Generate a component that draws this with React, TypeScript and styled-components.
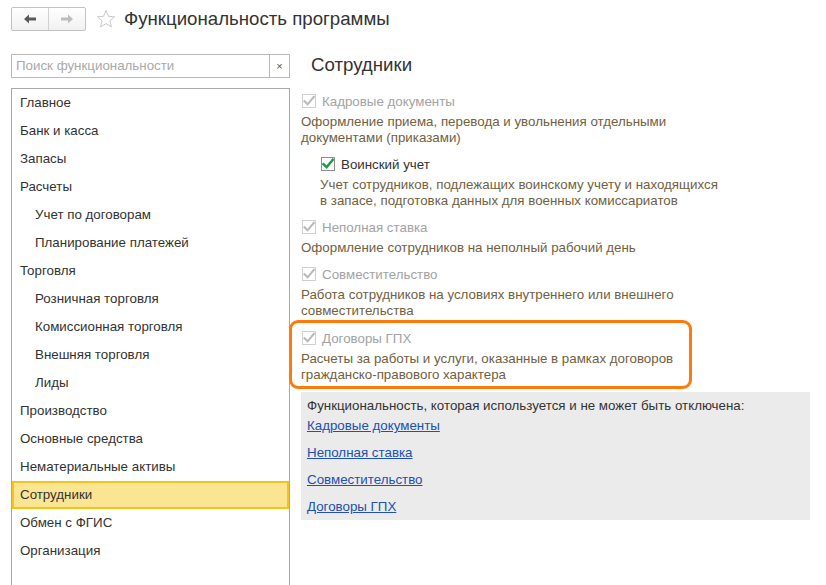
import React from 'react';
import styled, { createGlobalStyle } from 'styled-components';

const GlobalStyle = createGlobalStyle`
  html, body {
    margin: 0;
    padding: 0;
    background: #fff;
  }
  body {
    font-family: 'Liberation Sans', Arial, sans-serif;
    font-size: 10pt;
    color: #333;
  }
`;

const Page = styled.div`
  width: 826px;
  height: 585px;
  overflow: hidden;
  display: flex;
  flex-direction: column;
`;

const TopBar = styled.div`
  display: flex;
  align-items: center;
  height: 24px;
  padding: 7px 0 0 11px;
`;

const NavGroup = styled.div`
  display: flex;
  height: 24px;
  border: 1px solid #c2c2c2;
  border-radius: 2px;
  box-sizing: border-box;
  background: linear-gradient(#ffffff, #f1f1f1);
`;

const NavButton = styled.div<{ $divider?: boolean }>`
  width: 36px;
  display: flex;
  align-items: center;
  justify-content: center;
  border-right: ${(p) => (p.$divider ? '1px solid #d0d0d0' : 'none')};
`;

const StarBox = styled.div`
  margin-left: 10px;
  width: 20px;
  height: 20px;
  display: flex;
  align-items: center;
  justify-content: center;
`;

const Title = styled.h1`
  margin: 0 0 0 8px;
  font-size: 14pt;
  font-weight: normal;
  color: #333;
  line-height: 24px;
`;

const Body = styled.div`
  display: flex;
  flex: 1;
  gap: 11px;
  padding: 23px 0 0 11px;
  min-height: 0;
`;

const LeftColumn = styled.div`
  width: 279px;
  display: flex;
  flex-direction: column;
`;

const SearchBox = styled.div`
  display: flex;
  height: 24px;
  border: 1px solid #b9b9b9;
  box-sizing: border-box;
`;

const SearchInput = styled.div`
  flex: 1;
  padding-left: 4px;
  color: #a9a9a9;
  line-height: 22px;
`;

const ClearButton = styled.div`
  width: 19px;
  border-left: 1px solid #b9b9b9;
  display: flex;
  align-items: center;
  justify-content: center;
  color: #555;
  font-size: 11px;
`;

const SectionList = styled.div`
  margin-top: 10px;
  flex: 1;
  border: 1px solid #a9a9a9;
  border-bottom: none;
`;

const SectionItem = styled.div<{ $sub?: boolean; $selected?: boolean }>`
  height: 28px;
  line-height: ${(p) => (p.$selected ? '24px' : '28px')};
  box-sizing: border-box;
  color: #333;
  white-space: nowrap;
  background: ${(p) => (p.$selected ? '#fce592' : 'transparent')};
  border: ${(p) => (p.$selected ? '2px solid #f4c419' : 'none')};
  padding-left: ${(p) => (p.$selected ? '6px' : p.$sub ? '23px' : '8px')};
`;

const RightColumn = styled.div`
  width: 509px;
  display: flex;
  flex-direction: column;
`;

const SectionTitle = styled.h2`
  margin: 0 0 0 10px;
  height: 24px;
  line-height: 21px;
  font-size: 14pt;
  font-weight: normal;
  color: #333;
`;

const Options = styled.div`
  margin-top: 13px;
  display: flex;
  flex-direction: column;
`;

const Option = styled.div<{ $indent?: boolean; $tight?: boolean }>`
  margin-left: ${(p) => (p.$indent ? '19px' : '0')};
  margin-bottom: ${(p) => (p.$tight ? '1px' : '8px')};
`;

const CheckRow = styled.div`
  display: flex;
  align-items: center;
  height: 20px;
  padding-left: 1px;
`;

const CheckBox = styled.div<{ $disabled?: boolean }>`
  width: 14px;
  height: 14px;
  box-sizing: border-box;
  border: 1px solid ${(p) => (p.$disabled ? '#cfcfcf' : '#8f8f8f')};
  background: #fff;
  display: flex;
  align-items: center;
  justify-content: center;
`;

const CheckLabel = styled.span<{ $disabled?: boolean }>`
  margin-left: 6px;
  color: ${(p) => (p.$disabled ? '#a3a3a3' : '#333')};
`;

const Description = styled.div`
  margin-top: 3px;
  line-height: 16px;
  color: #72613f;
`;

const Highlight = styled.div`
  margin-left: -12px;
  width: 403px;
  box-sizing: border-box;
  border: 3px solid #ff7a0a;
  border-radius: 9px;
  padding: 5px 0 3px 9px;
  & > div {
    margin-bottom: 0;
  }
`;

const InfoPanel = styled.div`
  margin-top: 3px;
  background: #ebebeb;
  padding: 6px 6px 5px;
  display: flex;
  flex-direction: column;
`;

const InfoText = styled.div`
  line-height: 16px;
  color: #333;
`;

const InfoLink = styled.a`
  margin-top: 11px;
  line-height: 16px;
  color: #2150b3;
  text-decoration: underline;
  cursor: pointer;
  align-self: flex-start;
  &:first-of-type {
    margin-top: 4px;
  }
`;

const ArrowIcon = ({ dir, color }: { dir: 'left' | 'right'; color: string }) => (
  <svg width="14" height="10" viewBox="0 0 14 10">
    <g transform={dir === 'right' ? 'translate(14 0) scale(-1 1)' : undefined}>
      <path d="M1 5 L6 0.5 L6 3.5 L13 3.5 L13 6.5 L6 6.5 L6 9.5 Z" fill={color} />
    </g>
  </svg>
);

const StarIcon = () => (
  <svg width="20" height="20" viewBox="0 0 20 20">
    <path
      d="M10 1.5 L12.5 7.3 L18.6 7.8 L13.9 11.8 L15.4 17.9 L10 14.6 L4.6 17.9 L6.1 11.8 L1.4 7.8 L7.5 7.3 Z"
      fill="none"
      stroke="#c9c9c9"
      strokeWidth="1"
      strokeLinejoin="round"
    />
  </svg>
);

const CheckMark = ({ disabled }: { disabled?: boolean }) => (
  <svg width="12" height="12" viewBox="0 0 12 12">
    <path
      d="M1.5 6.2 L4.6 9.3 L10.8 1.8"
      fill="none"
      stroke={disabled ? '#b8b8b8' : '#1e9b45'}
      strokeWidth={disabled ? 2 : 2.4}
      strokeLinecap="square"
    />
  </svg>
);

interface OptionProps {
  label: string;
  text: React.ReactNode;
  disabled?: boolean;
  indent?: boolean;
  tight?: boolean;
}

const OptionBlock = ({ label, text, disabled, indent, tight }: OptionProps) => (
  <Option $indent={indent} $tight={tight}>
    <CheckRow>
      <CheckBox $disabled={disabled}>
        <CheckMark disabled={disabled} />
      </CheckBox>
      <CheckLabel $disabled={disabled}>{label}</CheckLabel>
    </CheckRow>
    <Description>{text}</Description>
  </Option>
);

const sections: { name: string; sub?: boolean }[] = [
  { name: 'Главное' },
  { name: 'Банк и касса' },
  { name: 'Запасы' },
  { name: 'Расчеты' },
  { name: 'Учет по договорам', sub: true },
  { name: 'Планирование платежей', sub: true },
  { name: 'Торговля' },
  { name: 'Розничная торговля', sub: true },
  { name: 'Комиссионная торговля', sub: true },
  { name: 'Внешняя торговля', sub: true },
  { name: 'Лиды', sub: true },
  { name: 'Производство' },
  { name: 'Основные средства' },
  { name: 'Нематериальные активы' },
  { name: 'Сотрудники' },
  { name: 'Обмен с ФГИС' },
  { name: 'Организация' },
];

const lockedLinks = ['Кадровые документы', 'Неполная ставка', 'Совместительство', 'Договоры ГПХ'];

export default function App() {
  return (
    <Page>
      <GlobalStyle />
      <TopBar>
        <NavGroup>
          <NavButton $divider>
            <ArrowIcon dir="left" color="#5a5a5a" />
          </NavButton>
          <NavButton>
            <ArrowIcon dir="right" color="#bdbdbd" />
          </NavButton>
        </NavGroup>
        <StarBox>
          <StarIcon />
        </StarBox>
        <Title>Функциональность программы</Title>
      </TopBar>
      <Body>
        <LeftColumn>
          <SearchBox>
            <SearchInput>Поиск функциональности</SearchInput>
            <ClearButton>×</ClearButton>
          </SearchBox>
          <SectionList>
            {sections.map((s) => (
              <SectionItem key={s.name} $sub={s.sub} $selected={s.name === 'Сотрудники'}>
                {s.name}
              </SectionItem>
            ))}
          </SectionList>
        </LeftColumn>
        <RightColumn>
          <SectionTitle>Сотрудники</SectionTitle>
          <Options>
            <OptionBlock
              disabled
              label="Кадровые документы"
              text={
                <>
                  Оформление приема, перевода и увольнения отдельными
                  <br />
                  документами (приказами)
                </>
              }
            />
            <OptionBlock
              indent
              label="Воинский учет"
              text={
                <>
                  Учет сотрудников, подлежащих воинскому учету и находящихся
                  <br />в запасе, подготовка данных для военных комиссариатов
                </>
              }
            />
            <OptionBlock
              disabled
              label="Неполная ставка"
              text="Оформление сотрудников на неполный рабочий день"
            />
            <OptionBlock
              disabled
              tight
              label="Совместительство"
              text={
                <>
                  Работа сотрудников на условиях внутреннего или внешнего
                  <br />
                  совместительства
                </>
              }
            />
            <Highlight>
              <OptionBlock
                disabled
                label="Договоры ГПХ"
                text={
                  <>
                    Расчеты за работы и услуги, оказанные в рамках договоров
                    <br />
                    гражданско-правового характера
                  </>
                }
              />
            </Highlight>
            <InfoPanel>
              <InfoText>Функциональность, которая используется и не может быть отключена:</InfoText>
              {lockedLinks.map((l) => (
                <InfoLink key={l}>{l}</InfoLink>
              ))}
            </InfoPanel>
          </Options>
        </RightColumn>
      </Body>
    </Page>
  );
}
